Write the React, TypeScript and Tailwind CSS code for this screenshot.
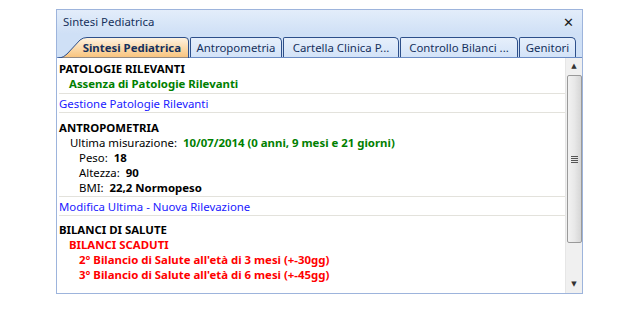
import React from "react";

const tabs = [
  { label: "Antropometria", w: "w-[92px]" },
  { label: "Cartella Clinica P...", w: "w-[116px]" },
  { label: "Controllo Bilanci ...", w: "w-[118px]" },
  { label: "Genitori", w: "w-[57px]" },
];

function Separator() {
  return <div className="h-px bg-[#e3e2dc]" />;
}

export default function App() {
  return (
    <div className="w-[640px] h-[320px] bg-white pt-[9px] pl-[56px] font-['Noto_Sans','DejaVu_Sans',sans-serif] text-[11.4px]">
      <div className="w-[527px] h-[285px] border border-[#9db4dc] flex flex-col">
        {/* title bar */}
        <div className="h-[24px] flex items-center justify-between px-[6px] bg-gradient-to-b from-[#e3edfa] to-[#cfe0f6] text-[#15305c]">
          <span>Sintesi Pediatrica</span>
          <span className="font-bold text-[13px] leading-none pr-[2px] text-[#1a1a1a]">✕</span>
        </div>

        {/* tab strip */}
        <div className="h-[24px] flex items-end bg-[#cfe0f6] pl-[1px] pr-[5px] border-b border-[#6a8bc3]">
          <div className="relative w-[131px] h-[21px] flex items-center justify-end pr-[8px] -mb-px">
            <svg className="absolute inset-0" width="131" height="21" viewBox="0 0 131 21">
              <defs>
                <linearGradient id="act" x1="0" y1="0" x2="0" y2="1">
                  <stop offset="0" stopColor="#fff4e2" />
                  <stop offset="1" stopColor="#f8c27a" />
                </linearGradient>
              </defs>
              <path d="M0.5 21 L2 21 Q6 20 9 17 L22 3 Q25 0.5 29 0.5 L127 0.5 Q130.5 0.5 130.5 4 L130.5 21 Z" fill="url(#act)" stroke="#2d4f8a" />
            </svg>
            <span className="relative font-bold text-[#15305c]">Sintesi Pediatrica</span>
          </div>
          {tabs.map((t) => (
            <div
              key={t.label}
              className={`${t.w} h-[20px] ml-[1px] flex items-center justify-center border border-b-0 border-[#2d4f8a] rounded-tr-[5px] rounded-tl-[2px] bg-gradient-to-b from-[#e6effb] to-[#d3e3f8] text-[#15305c]`}
            >
              {t.label}
            </div>
          ))}
        </div>

        {/* content */}
        <div className="flex-1 flex min-h-0">
          <div className="flex-1 pl-[2px] leading-[15px] text-black">
            <div className="pt-[3px] pb-[2px]">
              <div className="font-bold">PATOLOGIE RILEVANTI</div>
              <div className="pl-[10px] font-bold text-[#008000]">Assenza di Patologie Rilevanti</div>
            </div>
            <Separator />
            <div className="pt-[2px] pb-px text-[#2020ff]">Gestione Patologie Rilevanti</div>
            <Separator />
            <div className="pt-[7px] pb-px">
              <div className="font-bold">ANTROPOMETRIA</div>
              <div className="pl-[11px]">
                Ultima misurazione:&nbsp; <span className="font-bold text-[#008000]">10/07/2014 (0 anni, 9 mesi e 21 giorni)</span>
              </div>
              <div className="pl-[20px]">Peso:&nbsp; <span className="font-bold">18</span></div>
              <div className="pl-[20px]">Altezza:&nbsp; <span className="font-bold">90</span></div>
              <div className="pl-[20px]">BMI:&nbsp; <span className="font-bold">22,2 Normopeso</span></div>
            </div>
            <Separator />
            <div className="pt-[2px] pb-px text-[#2020ff]">Modifica Ultima - Nuova Rilevazione</div>
            <Separator />
            <div className="pt-[6px]">
              <div className="font-bold">BILANCI DI SALUTE</div>
              <div className="pl-[10px] font-bold text-[#ff0000]">BILANCI SCADUTI</div>
              <div className="pl-[20px] font-bold text-[#ff0000]">2° Bilancio di Salute all'età di 3 mesi (+-30gg)</div>
              <div className="pl-[20px] font-bold text-[#ff0000]">3° Bilancio di Salute all'età di 6 mesi (+-45gg)</div>
            </div>
          </div>

          {/* scrollbar */}
          <div className="w-[17px] bg-[#f0f0f0] border-l border-[#e6e6e6] flex flex-col items-center">
            <div className="h-[17px] flex items-center justify-center text-[7px] text-[#333]">▲</div>
            <div className="w-[15px] h-[168px] rounded-[2px] border border-[#9a9a9a] bg-gradient-to-r from-[#f2f2f2] via-[#e8e8e8] to-[#d6d6d6] flex items-center justify-center">
              <div className="flex flex-col gap-[1px]">
                <div className="w-[7px] h-px bg-[#555]" />
                <div className="w-[7px] h-px bg-[#555]" />
                <div className="w-[7px] h-px bg-[#555]" />
                <div className="w-[7px] h-px bg-[#555]" />
              </div>
            </div>
            <div className="flex-1" />
            <div className="h-[17px] flex items-center justify-center text-[7px] text-[#333]">▼</div>
          </div>
        </div>
      </div>
    </div>
  );
}
